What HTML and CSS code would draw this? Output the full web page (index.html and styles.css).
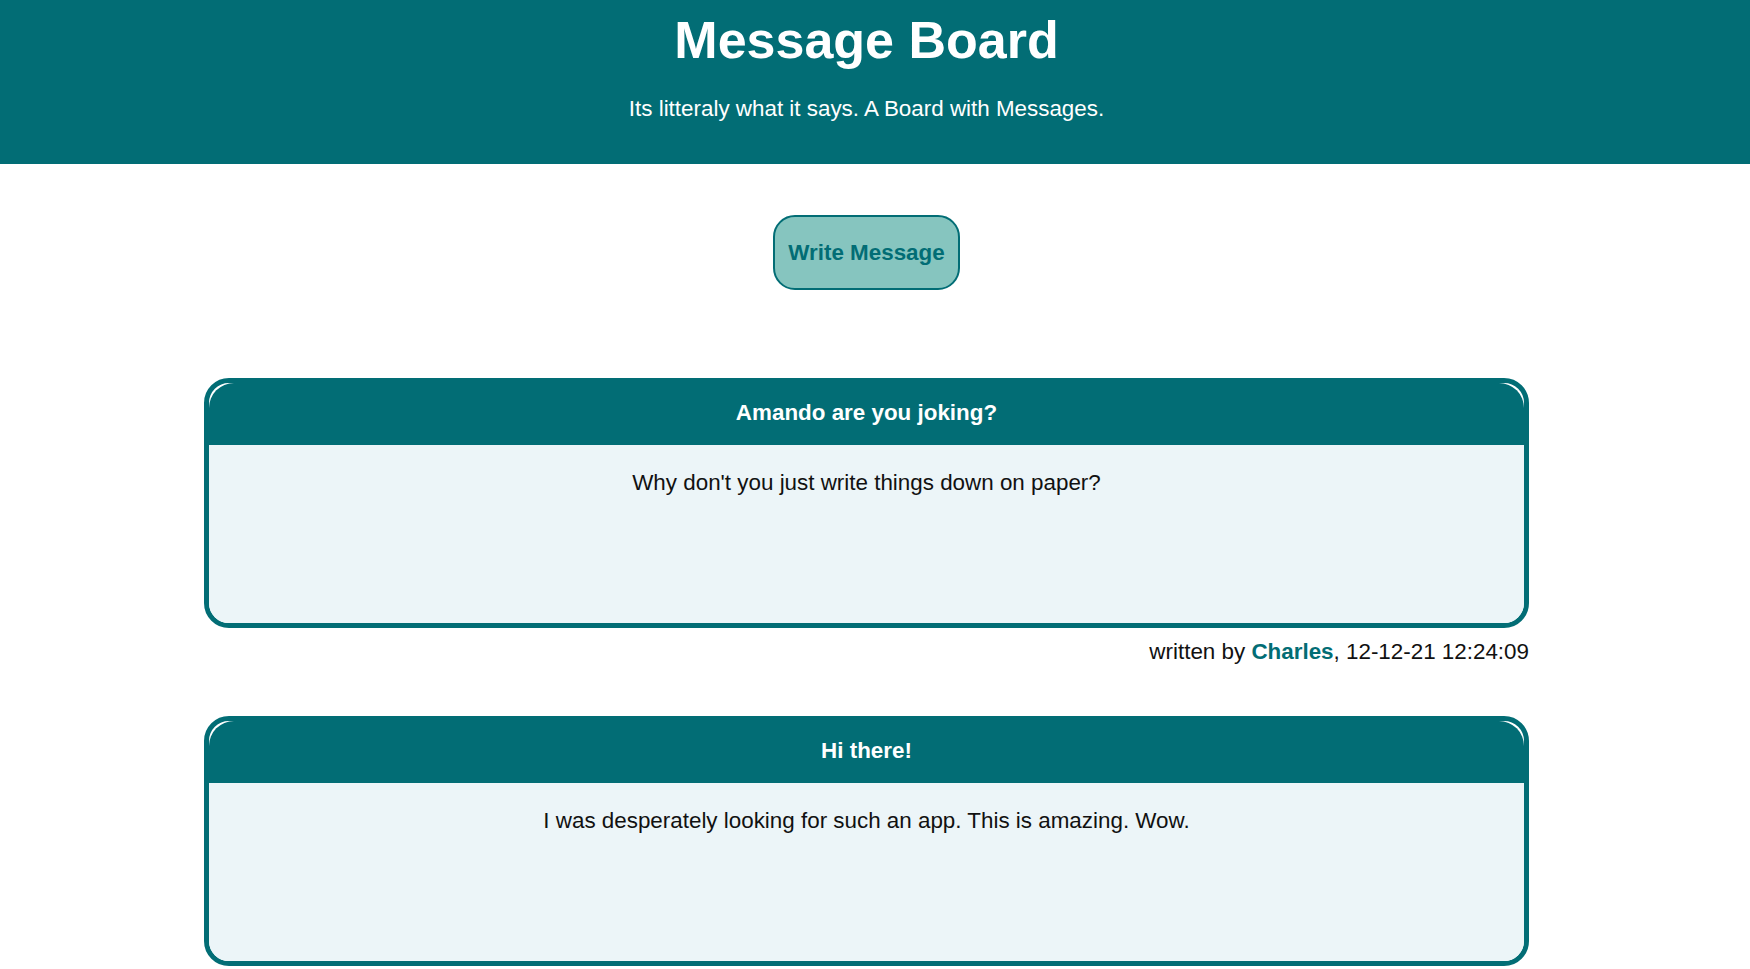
FILE: index.html
```html
<!DOCTYPE html>
<html lang="en">
<head>
<meta charset="utf-8">
<title>Message Board</title>
<link rel="stylesheet" href="styles.css">
</head>
<body>
<header class="site-header">
  <h1 class="site-title">Message Board</h1>
  <p class="site-subtitle">Its litteraly what it says. A Board with Messages.</p>
</header>
<main class="board">
  <div class="actions">
    <button class="write-btn" type="button">Write Message</button>
  </div>
  <section class="messages">
    <article class="message">
      <div class="card">
        <h3 class="card-title">Amando are you joking?</h3>
        <div class="card-body">Why don't you just write things down on paper?</div>
      </div>
      <p class="meta">written by <span class="author">Charles</span>, 12-12-21 12:24:09</p>
    </article>
    <article class="message">
      <div class="card">
        <h3 class="card-title">Hi there!</h3>
        <div class="card-body">I was desperately looking for such an app. This is amazing. Wow.</div>
      </div>
    </article>
  </section>
</main>
</body>
</html>
```

FILE: styles.css
```css
html, body {
  margin: 0;
  padding: 0;
}
body {
  font-family: "Liberation Sans", Arial, sans-serif;
  color: #111;
  background: #fff;
  padding-right: 17px;
}
.site-header {
  background: #026d75;
  color: #fff;
  text-align: center;
  padding: 10px 17px 42px 0;
  margin-right: -17px;
}
.site-title {
  margin: 0;
  font-size: 52px;
  line-height: 60px;
  font-weight: bold;
}
.site-subtitle {
  margin: 26px 0 0;
  font-size: 22.4px;
  line-height: 26px;
}
.board {
  width: 1325px;
  margin: 0 auto;
}
.actions {
  display: flex;
  justify-content: center;
  padding-top: 51px;
}
.write-btn {
  font-family: "Liberation Sans", Arial, sans-serif;
  font-size: 22.4px;
  line-height: 26px;
  font-weight: bold;
  color: #026d75;
  background: #86c5bf;
  border: 2px solid #026d75;
  border-radius: 22px;
  padding: 22.5px 13.5px;
  cursor: pointer;
}
.messages {
  display: flex;
  flex-direction: column;
  gap: 51px;
  margin-top: 88px;
}
.card {
  border: 5px solid #026d75;
  border-radius: 25px;
  background: #fff;
  overflow: hidden;
}
.card-title {
  margin: 0;
  background: #026d75;
  color: #fff;
  border-radius: 25px 25px 0 0;
  text-align: center;
  font-size: 22.4px;
  line-height: 26px;
  font-weight: bold;
  padding: 16.5px 0 19.5px;
}
.card-body {
  background: #ecf5f8;
  height: 178px;
  box-sizing: border-box;
  padding-top: 24.5px;
  text-align: center;
  font-size: 22.4px;
  line-height: 26px;
  color: #111;
}
.meta {
  margin: 11px 0 0;
  text-align: right;
  font-size: 22.4px;
  line-height: 26px;
  color: #111;
}
.author {
  font-weight: bold;
  color: #026d75;
}
```
